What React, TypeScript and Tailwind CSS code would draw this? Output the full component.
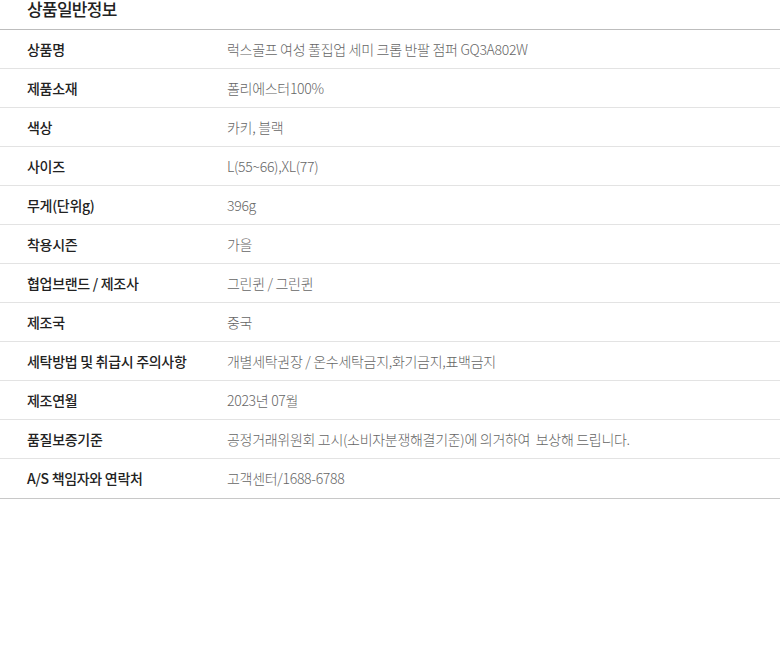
import React from "react";

const rows: [string, string][] = [
  ["상품명", "럭스골프 여성 풀집업 세미 크롭 반팔 점퍼 GQ3A802W"],
  ["제품소재", "폴리에스터100%"],
  ["색상", "카키, 블랙"],
  ["사이즈", "L(55~66),XL(77)"],
  ["무게(단위g)", "396g"],
  ["착용시즌", "가을"],
  ["협업브랜드 / 제조사", "그린퀸 / 그린퀸"],
  ["제조국", "중국"],
  ["세탁방법 및 취급시 주의사항", "개별세탁권장 / 온수세탁금지,화기금지,표백금지"],
  ["제조연월", "2023년 07월"],
  ["품질보증기준", "공정거래위원회 고시(소비자분쟁해결기준)에 의거하여  보상해 드립니다."],
  ["A/S 책임자와 연락처", "고객센터/1688-6788"],
];

const App = () => {
  return (
    <div
      className="w-[780px] h-[653px] bg-white overflow-hidden"
      style={{ fontFamily: '"Noto Sans CJK KR", "Noto Sans", sans-serif' }}
    >
      <div className="h-[30px] pl-[27px] border-b border-[#bdbdbd]">
        <h2 className="text-[17px] leading-[17px] font-medium text-[#222] tracking-[-0.7px]">
          상품일반정보
        </h2>
      </div>
      <div className="border-b border-[#c8c8c8]">
        {rows.map(([label, value], i) => (
          <div
            key={label}
            className={
              "flex items-center h-[39px] " +
              (i < rows.length - 1 ? "border-b border-[#e3e3e3]" : "")
            }
          >
            <div className="w-[227px] shrink-0 pl-[27px] text-[14px] font-medium text-[#222] tracking-[-0.3px] whitespace-pre">
              {label}
            </div>
            <div className="flex-1 text-[14px] font-light text-[#666] tracking-[-0.3px] whitespace-pre">
              {value}
            </div>
          </div>
        ))}
      </div>
    </div>
  );
};

export default App;
